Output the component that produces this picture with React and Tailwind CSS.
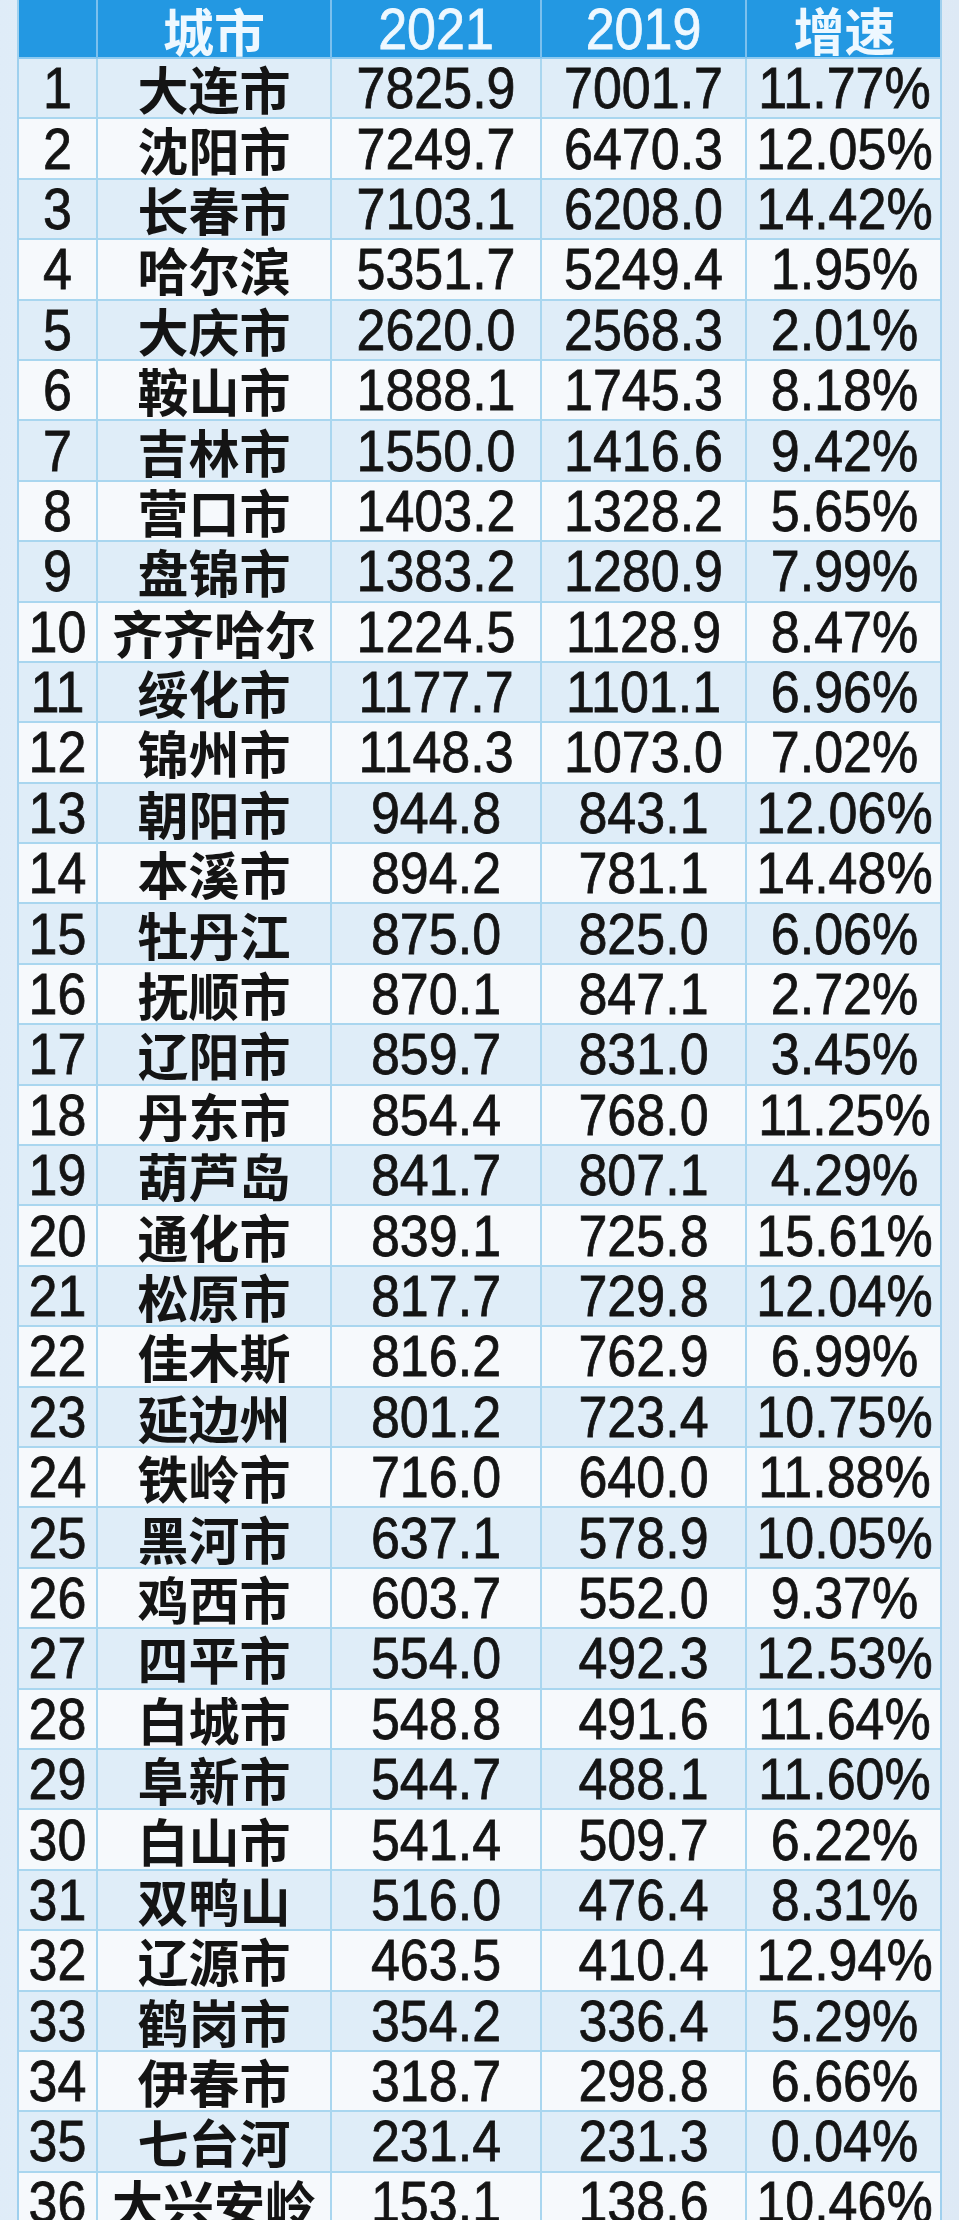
import React from "react";

const rows = [
  ["1", "大连市", "7825.9", "7001.7", "11.77%"],
  ["2", "沈阳市", "7249.7", "6470.3", "12.05%"],
  ["3", "长春市", "7103.1", "6208.0", "14.42%"],
  ["4", "哈尔滨", "5351.7", "5249.4", "1.95%"],
  ["5", "大庆市", "2620.0", "2568.3", "2.01%"],
  ["6", "鞍山市", "1888.1", "1745.3", "8.18%"],
  ["7", "吉林市", "1550.0", "1416.6", "9.42%"],
  ["8", "营口市", "1403.2", "1328.2", "5.65%"],
  ["9", "盘锦市", "1383.2", "1280.9", "7.99%"],
  ["10", "齐齐哈尔", "1224.5", "1128.9", "8.47%"],
  ["11", "绥化市", "1177.7", "1101.1", "6.96%"],
  ["12", "锦州市", "1148.3", "1073.0", "7.02%"],
  ["13", "朝阳市", "944.8", "843.1", "12.06%"],
  ["14", "本溪市", "894.2", "781.1", "14.48%"],
  ["15", "牡丹江", "875.0", "825.0", "6.06%"],
  ["16", "抚顺市", "870.1", "847.1", "2.72%"],
  ["17", "辽阳市", "859.7", "831.0", "3.45%"],
  ["18", "丹东市", "854.4", "768.0", "11.25%"],
  ["19", "葫芦岛", "841.7", "807.1", "4.29%"],
  ["20", "通化市", "839.1", "725.8", "15.61%"],
  ["21", "松原市", "817.7", "729.8", "12.04%"],
  ["22", "佳木斯", "816.2", "762.9", "6.99%"],
  ["23", "延边州", "801.2", "723.4", "10.75%"],
  ["24", "铁岭市", "716.0", "640.0", "11.88%"],
  ["25", "黑河市", "637.1", "578.9", "10.05%"],
  ["26", "鸡西市", "603.7", "552.0", "9.37%"],
  ["27", "四平市", "554.0", "492.3", "12.53%"],
  ["28", "白城市", "548.8", "491.6", "11.64%"],
  ["29", "阜新市", "544.7", "488.1", "11.60%"],
  ["30", "白山市", "541.4", "509.7", "6.22%"],
  ["31", "双鸭山", "516.0", "476.4", "8.31%"],
  ["32", "辽源市", "463.5", "410.4", "12.94%"],
  ["33", "鹤岗市", "354.2", "336.4", "5.29%"],
  ["34", "伊春市", "318.7", "298.8", "6.66%"],
  ["35", "七台河", "231.4", "231.3", "0.04%"],
  ["36", "大兴安岭", "153.1", "138.6", "10.46%"],
];

const font = { fontFamily: '"Liberation Sans", "Noto Sans CJK SC", Arial, sans-serif' };

function Num({ children }) {
  return (
    <span className="inline-block scale-y-[1.12] whitespace-nowrap text-[52px] leading-[46px] [-webkit-text-stroke:0.7px_currentColor]">
      {children}
    </span>
  );
}

function Cjk({ children, className = "" }) {
  return (
    <span
      className={"inline-block whitespace-nowrap text-[51px] leading-[56px] font-bold " + className}
      style={{ fontFamily: '"Noto Sans CJK SC", sans-serif' }}
    >
      {children}
    </span>
  );
}

const cols = "grid grid-cols-[79px_234px_210px_205px_195px]";

export default function App() {
  return (
    <div
      className="w-[959px] h-[2220px] overflow-hidden bg-gradient-to-r from-[#dfecf8] via-[#eef5fb] to-[#dde9f5] px-[17px]"
      style={font}
    >
      <div className="border-x-2 border-[#9fd0ee] text-[#141414]">
        <div className={cols + " h-[59px] bg-[#2398e2] border-b-2 border-[#8fcaf0] text-white"}>
          <div className="border-r-2 border-[#7cc0ee]" />
          <div className="flex items-center justify-center border-r-2 border-[#7cc0ee] pt-[2px]">
            <Cjk className="text-[#eef8ff]">城市</Cjk>
          </div>
          <div className="flex items-center justify-center border-r-2 border-[#7cc0ee] text-[#eef8ff]">
            <Num>2021</Num>
          </div>
          <div className="flex items-center justify-center border-r-2 border-[#7cc0ee] text-[#eef8ff]">
            <Num>2019</Num>
          </div>
          <div className="flex items-center justify-center text-[#eef8ff]">
            <Cjk className="text-[#eef8ff]">增速</Cjk>
          </div>
        </div>
        {rows.map((r, i) => (
          <div
            key={r[0]}
            className={
              cols +
              " h-[60.4px] border-b-2 border-[#a9d6ef] " +
              (i % 2 === 0 ? "bg-[#dfedf8]" : "bg-[#f6f9fc]")
            }
          >
            <div className="flex items-center justify-center border-r-2 border-[#a9d6ef]">
              <Num>{r[0]}</Num>
            </div>
            <div className="flex items-center justify-center border-r-2 border-[#a9d6ef]">
              <Cjk>{r[1]}</Cjk>
            </div>
            <div className="flex items-center justify-center border-r-2 border-[#a9d6ef]">
              <Num>{r[2]}</Num>
            </div>
            <div className="flex items-center justify-center border-r-2 border-[#a9d6ef]">
              <Num>{r[3]}</Num>
            </div>
            <div className="flex items-center justify-center">
              <Num>{r[4]}</Num>
            </div>
          </div>
        ))}
      </div>
    </div>
  );
}
